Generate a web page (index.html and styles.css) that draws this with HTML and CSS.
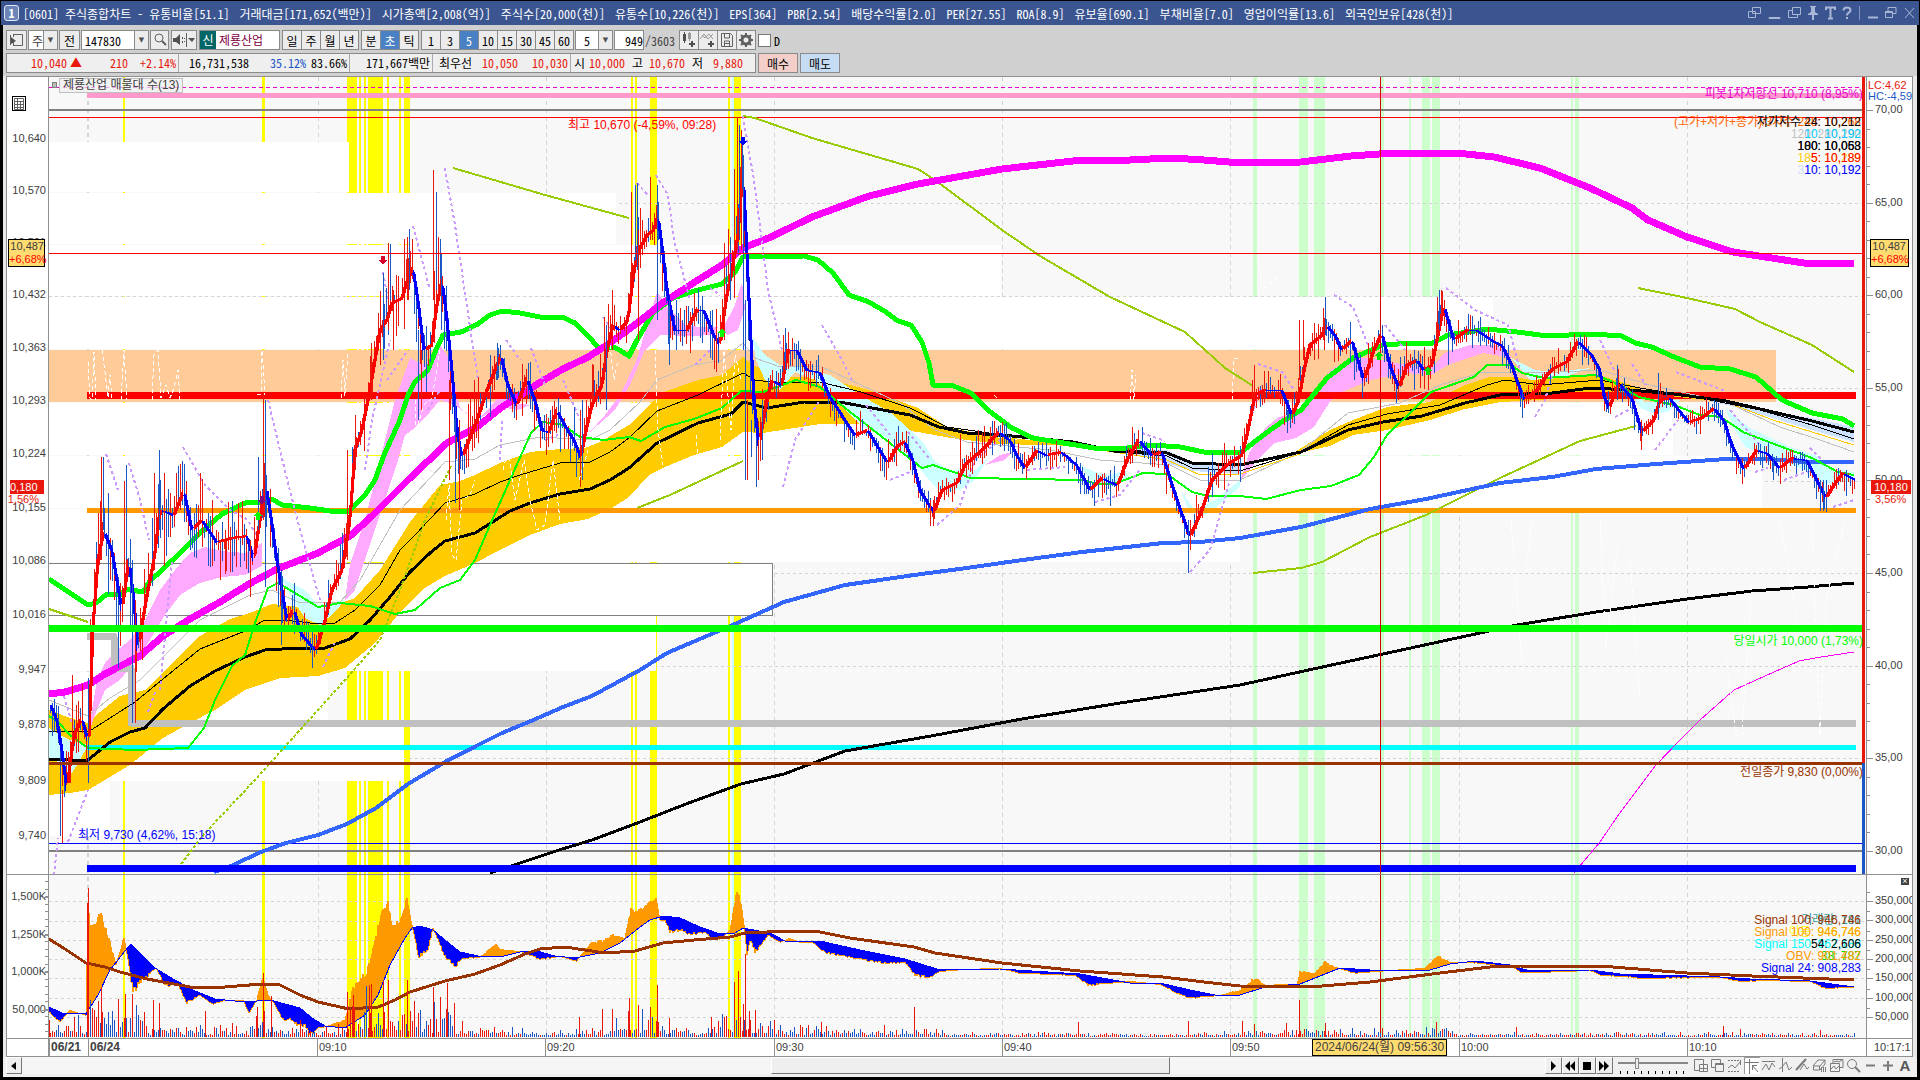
FILE: index.html
```html
<!DOCTYPE html>
<html lang="ko">
<head>
    <meta charset="utf-8">
    <title>[0601] 주식종합차트</title>
    <link rel="stylesheet" href="styles.css">
</head>
<body>
<div class="window">
    <header class="titlebar">
        <span class="num">1</span>
        <h1><span>[0601] 주식종합차트 - 유통비율[51.1]</span><span>거래대금[171,652(백만)]</span><span>시가총액[2,008(억)]</span><span>주식수[20,000(천)]</span><span>유통수[10,226(천)]</span><span>EPS[364]</span><span>PBR[2.54]</span><span>배당수익률[2.0]</span><span>PER[27.55]</span><span>ROA[8.9]</span><span>유보율[690.1]</span><span>부채비율[7.0]</span><span>영업이익률[13.6]</span><span>외국인보유[428(천)]</span></h1>
        <div class="winbtns">
            <button aria-label="복사"><svg width="16" height="14"><path d="M5.500 1.500h8v6h-8zM1.500 5.500h7v6h-7z"/></svg></button>
            <button aria-label="내리기"><svg width="16" height="14"><path d="M2 11.500h11v1H2z"/></svg></button>
            <button aria-label="겹치기"><svg width="16" height="14"><path d="M5.500 1.500h8v7h-8zM5 4.500H1.500v7h9V9"/></svg></button>
            <button aria-label="고정"><svg width="12" height="14"><path class="f" d="M3 0h6v1H8v5l3 2v1H7v5H5V9H1V8l3-2V1H3z"/></svg></button>
            <button aria-label="글꼴"><svg width="14" height="14"><path d="M3 4V1.500h9V4M7.500 2v10M5 12.500h5" stroke-width="2"/></svg></button>
            <button aria-label="도움말"><svg width="12" height="14"><path d="M2.500 4.500c0-4 7-4 7 0 0 2-3.500 2-3.500 5M6 11v2" stroke-width="2"/></svg></button>
            <i></i>
            <button aria-label="최소화"><svg width="14" height="14"><path d="M2 11.500h10" stroke-width="2"/></svg></button>
            <button aria-label="이전 크기"><svg width="14" height="14"><path d="M4 5V1.500h8v6H9M1.500 5.500h7v6h-7zM1 6.500h8"/></svg></button>
            <button aria-label="닫기"><svg width="14" height="14"><path d="M3 2l9 10M12 2L3 12"/></svg></button>
        </div>
    </header>

    <div class="toolbar">
        <button class="tb ico" aria-label="패널"><svg width="15" height="14"><path d="M4.500 1.500h9v11h-9M4.500 1v3M4.500 9v4M1.500 2v10"/><path class="f" d="M2 9V4l5 4-5 3z"/></svg></button>
        <span class="drop w30"><select aria-label="종류"><option>주</option></select></span>
        <button class="tb">전</button>
        <span class="drop w68"><input class="code" aria-label="종목코드" value="147830"></span>
        <button class="tb find" aria-label="검색"><svg width="14" height="14"><circle cx="6" cy="5" r="4"/><path d="M9 8l4 4" stroke-width="2"/></svg></button>
        <span class="gap"></span>
        <button class="tb snd" aria-label="소리"><svg width="24" height="14"><path class="f" d="M1 5h3l4-4v11L4 9H1zM16 5h7l-3 4zM10 4h1v2h-1zM10 8h1v2h-1zM12 5h1v1h-1zM12 8h1v1h-1z"/><path d="M14.500 0v14"/></svg></button>
        <span class="gap"></span>
        <span class="stock"><b>신</b>제룡산업</span>
        <span class="gap"></span>
        <span class="grp g4"><button>일</button><button>주</button><button>월</button><button>년</button></span>
        <span class="gap"></span>
        <span class="grp g3"><button>분</button><button class="on">초</button><button>틱</button></span>
        <span class="gap"></span>
        <span class="grp g8"><button>1</button><button>3</button><button class="on">5</button><button>10</button><button>15</button><button>30</button><button>45</button><button>60</button></span>
        <span class="drop w38"><select aria-label="간격"><option>5</option></select></span>
        <input class="cnt" aria-label="봉 개수" value="949"><span class="total">/3603</span>
        <span class="grp g4 icons">
            <button aria-label="지표 추가"><svg width="18" height="18"><path class="f" d="M3 3h3v7H3zM4 1h1v11H4zM11 10h2v6h-2zM9 12h6v2H9z"/><path class="g" d="M8 2h3v6H8zM9 1h1v9H9z"/></svg></button>
            <button aria-label="라인 추가"><svg width="18" height="18"><path d="M1 8l4-5 4 5 5-5M3 4l3 3 4-4 4 5" stroke="#999"/><path class="f" d="M11 10h2v6h-2zM9 12h6v2H9z"/></svg></button>
            <button aria-label="저장"><svg width="18" height="18"><path d="M3.500 2.500h9l2 2v11h-11zM6.500 3v4h5V3M6.500 15v-5h5v5M7 12.500h4"/></svg></button>
            <button aria-label="설정"><svg width="18" height="18"><circle cx="9" cy="9" r="4" stroke-width="3"/><path d="M9 2v2M9 14v2M2 9h2M14 9h2M4 4l2 2M12 12l2 2M14 4l-2 2M4 14l2-2" stroke-width="2"/></svg></button>
        </span>
        <label class="chk"><input type="checkbox">D</label>
    </div>

    <div class="quote">
        <div class="qbox">
            <span class="red c60">10,040</span><span class="red c15">▲</span><span class="red c47">210</span><span class="red c48">+2.14%</span>
            <span class="bar c72">16,731,538</span><span class="blue c57">35.12%</span><span class="c41">83.66%</span>
            <span class="bar c81">171,667백만</span><span class="bar c39">최우선</span><span class="red c47">10,050</span><span class="red c50">10,030</span>
            <span class="bar c15">시</span><span class="red c39">10,000</span><span class="c18">고</span><span class="red c42">10,670</span><span class="c18">저</span><span class="red c39">9,880</span>
        </div>
        <button class="buy">매수</button><button class="sell">매도</button>
    </div>

    <main class="chart">
        <div class="axis left" id="axisL"><button class="cal" aria-label="표"><svg width="10" height="12"><path d="M.500.500h9v11h-9zM0 3.500h10M0 6.500h10M0 9.500h10M3.500 1v11M6.500 3v9"/></svg></button></div>
        <div class="plot">
            <svg id="price" viewBox="49 77 1817 797" preserveAspectRatio="none"></svg>
            <i class="dot"></i>
            <span class="study">제룡산업 매물대 수(13)</span>
            <div id="notes"></div>
        </div>
        <div class="axis right" id="axisR"></div>

        <div class="axis left" id="axisL2"></div>
        <div class="plot">
            <svg id="obv" viewBox="49 875 1817 163" preserveAspectRatio="none"></svg>
            <div id="notes2"></div>
        </div>
        <div class="axis right" id="axisR2"><button class="shut" aria-label="지표 닫기">×</button></div>

        <div class="axis left"></div>
        <div class="dates" id="dates"></div>
        <div class="axis right last">10:17:1</div>
    </main>

    <footer class="bottom">
        <button class="arr" aria-label="왼쪽"><svg width="8" height="10"><path class="k" d="M6 1v8L1 5z"/></svg></button>
        <div class="track"><div class="thumb"></div></div>
        <div class="play">
            <button aria-label="재생"><svg width="10" height="10"><path class="k" d="M3 0l5 5-5 5z"/></svg></button>
            <button aria-label="뒤로"><svg width="10" height="10"><path class="k" d="M5 0v10L0 5zM10 0v10L5 5z"/></svg></button>
            <button aria-label="정지"><svg width="10" height="10"><path class="k" d="M1 1h8v8H1z"/></svg></button>
            <button aria-label="앞으로"><svg width="10" height="10"><path class="k" d="M0 0v10l5-5zM5 0v10l5-5z"/></svg></button>
        </div>
        <input type="range" class="speed" aria-label="속도" min="0" max="100" value="26">
        <div class="tools">
            <button aria-label="새 창"><svg width="15" height="15"><path d="M6 12.500H1.500v-11h9V6M6.500 6.500h8v7h-8zM10.500 6v8M6 10.500h8"/></svg></button>
            <button aria-label="창 복사"><svg width="15" height="15"><path d="M5 9.500H1.500v-8h9V5M5.500 5.500h8v8h-8zM5 6.500h9"/></svg></button>
            <button aria-label="자동추세"><svg width="15" height="15"><path d="M1 2.500h12M1 13.500h12" stroke-dasharray="2 1"/><path d="M1 10l4-3 3 3 5-6M13.500 2v5"/></svg></button>
            <button class="on" aria-label="십자선"><svg width="15" height="15"><path d="M0 3.500h14M4.500 0v15M7 6l6 7M7.500 6v5M7 6.500h5" /></svg></button>
            <button aria-label="수평선"><svg width="15" height="15"><path d="M1 3.500h13M1 12l4-6 3 6 3-7 3 4"/></svg></button>
            <button aria-label="수직선"><svg width="15" height="15"><path d="M4.500 0v14M1 11l3-2 4-5 3 8 3-3"/></svg></button>
            <button aria-label="추세선"><svg width="15" height="15"><path d="M1 12L11 1" stroke-width="2"/><path d="M5 12l4-6 3 5 2-2"/></svg></button>
            <button aria-label="모두 지우기"><svg width="15" height="15"><path d="M1 8l5-6h7l-5 6zM1.500 8v4h6V8M8 12l5-6V2M9.500 9v5M11.500 9v5M13.500 9v5"/></svg></button>
            <button aria-label="차트 겹침"><svg width="15" height="15"><path d="M4 5V1.500h10v8h-3M1.500 5.500h9v8h-9zM2 11l3-3 2 3 3-3M5 4l3-1 2 1 3-2"/></svg></button>
            <button aria-label="돋보기"><svg width="15" height="15"><circle cx="6" cy="6" r="4.500"/><path d="M9 9l5 5" stroke-width="2"/></svg></button>
            <button aria-label="축소"><svg width="15" height="15"><path d="M3 7.500h9" stroke-width="2"/></svg></button>
            <button aria-label="확대"><svg width="15" height="15"><path d="M3 7.500h10M8 3v10" stroke-width="2"/></svg></button>
            <button class="a" aria-label="자동">A</button>
        </div>
    </footer>
</div>
<script src="chart.js"></script>
</body>
</html>
```
FILE: styles.css
```css
* { box-sizing: border-box; }
body {
    margin: 0;
    background: #000;
    color: #000;
    font: 12px "Noto Sans Mono CJK KR", "Noto Sans CJK KR", "Liberation Mono", monospace;
}
button, input, select { font: inherit; color: inherit; margin: 0; padding: 0; border-radius: 0; }
svg { display: block; fill: none; stroke: #606060; }
svg .f { fill: #505050; stroke: none; }
svg .g { fill: #999; stroke: none; }
svg .k { fill: #000; stroke: none; }

.window {
    display: flex;
    flex-direction: column;
    height: 100vh;
    border: solid #000;
    border-width: 1px 3px 3px;
    background: #e8e8e8;
}

/* title */
.titlebar {
    display: flex;
    align-items: center;
    flex: none;
    height: 24px;
    margin-left: -2px;
    margin-right: -2px;
    padding: 0 3px 0 3px;
    background: #3b5591;
    color: #fff;
}
.titlebar .num {
    width: 15px;
    height: 16px;
    border: 1px solid #dfe6f5;
    border-radius: 3px;
    background: #6c84b8;
    line-height: 14px;
    text-align: center;
    font-weight: bold;
}
.titlebar h1 {
    display: flex;
    gap: 10px;
    flex: 1;
    margin: 0 0 0 4px;
    font-size: 12px;
    font-weight: normal;
    white-space: pre;
    overflow: hidden;
}
.winbtns { display: flex; align-items: center; gap: 4px; }
.winbtns button { border: 0; background: none; }
.winbtns svg { stroke: #a9b6d6; }
.winbtns svg .f { fill: #a9b6d6; }
.winbtns i { width: 1px; height: 14px; margin: 0 2px; background: #8394c0; }

/* toolbar */
.toolbar {
    display: flex;
    align-items: center;
    flex: none;
    gap: 1px;
    height: 28px;
    padding: 5px 3px 3px;
    background: #d0d0d0;
}
.toolbar .gap { width: 0; }
.tb, .grp, .drop, .cnt, .stock {
    flex: none;
    height: 20px;
    border: 1px solid #8a8a8a;
    background: #ececec;
}
.tb { width: 21px; }
.tb.ico { padding-left: 2px; }
.tb.find { width: 19px; padding-left: 2px; }
.tb.snd { width: 26px; }
.drop { position: relative; display: flex; background: #fff; }
.drop select, .drop input {
    width: 100%;
    padding-left: 3px;
    border: 0;
    background: none;
    appearance: none;
}
.drop select { color: #404040; }
.drop::after {
    content: "▼";
    position: absolute;
    right: 0;
    top: 0;
    width: 13px;
    height: 18px;
    border-left: 1px solid #8a8a8a;
    background: #ececec;
    color: #505050;
    font: 7px/18px "DejaVu Sans", sans-serif;
    text-align: center;
    pointer-events: none;
}
.w30 { width: 30px; }
.w68 { width: 68px; }
.w38 { width: 38px; }
.w38 select { padding-left: 8px; color: #000; }
.stock { width: 81px; background: #fff; color: #800040; line-height: 18px; }
.stock b {
    display: inline-block;
    width: 16px;
    height: 18px;
    margin-right: 3px;
    background: #006666;
    color: #fff;
    font-weight: normal;
    text-align: center;
}
.grp { display: flex; }
.grp button { flex: 1; min-width: 0; border: 0; border-right: 1px solid #8a8a8a; background: none; }
.grp button:last-child { border-right: 0; }
.grp .on { background: #4a80c4; color: #fff; }
.g3 { width: 58px; }
.g4 { width: 77px; }
.g8 { width: 153px; }
.icons { margin-left: 3px; }
.cnt { width: 30px; background: #fff; text-align: right; }
.total { color: #404040; }
.chk { display: flex; align-items: center; gap: 3px; margin-left: 1px; }
.chk input { width: 13px; height: 13px; appearance: none; border: 1px solid #777; background: #fff; }

/* quote line */
.quote {
    display: flex;
    flex: none;
    gap: 2px;
    height: 23px;
    padding: 0 3px 3px;
    background: #d0d0d0;
}
.qbox {
    display: flex;
    align-items: center;
    width: 750px;
    border: 1px solid #8a8a8a;
    background: #efefef;
    white-space: nowrap;
}
.qbox span { flex: none; text-align: right; line-height: 18px; }
.qbox .bar { border-left: 1px solid #aaa; margin-left: 2px; }
.red { color: #e8190c; }
.blue { color: #1a56c4; }
.c15 { width: 15px; }
.c18 { width: 18px; }
.c39 { width: 40px; }
.c41 { width: 41px; }
.c42 { width: 42px; }
.c47 { width: 46px; }
.c48 { width: 48px; }
.c50 { width: 50px; }
.c57 { width: 57px; }
.c60 { width: 60px; }
.c72 { width: 71px; }
.c81 { width: 81px; }
.quote button { width: 40px; border: 1px solid #8a8a8a; }
.quote .buy { background: #f4cfc9; }
.quote .sell { background: #c6dcf2; }

/* chart */
.chart {
    display: grid;
    grid-template-columns: 42px 1fr 46px;
    grid-template-rows: 1fr 164px 17px;
    flex: 1;
    min-height: 0;
    margin: 0 4px 0 3px;
    border: 1px solid #909090;
    background: #fff;
    font: 11px "Liberation Sans", "Noto Sans CJK KR", sans-serif;
    color: #404040;
}
.axis { position: relative; overflow: hidden; }
.axis.left { border-right: 1px solid #909090; }
.axis.right { border-left: 1px solid #909090; }
.chart > :nth-child(-n+6) { border-bottom: 1px solid #909090; }
.axis span { position: absolute; line-height: 14px; margin-top: -7px; white-space: nowrap; }
.axis.left span { right: 2px; }
.axis.right span { left: 8px; }
.axis u { position: absolute; width: 3px; height: 1px; background: #909090; }
.axis u.big { width: 6px; }
.axis.left u { right: 0; }
.axis.right u { left: 0; }
.axis .cursor, .axis .now { z-index: 1; }
.axis .cursor {
    width: 37px;
    border: 1px solid #000;
    background: #ffdb70;
    line-height: 13px;
    text-align: right;
}
.axis .cursor em { display: block; color: #f00; font-style: normal; }
.axis.left .cursor { right: 3px; }
.axis.right .cursor { left: 3px; width: 39px; padding-right: 2px; }
.axis .now { width: 34px; background: #e8190c; color: #fff; }
.axis.left .now { right: 4px; }
.axis.right .now { left: 4px; width: 40px; text-align: center; }
.axis .r { color: #e8190c; }
.axis .b { color: #1a56c4; }
.axis.right .r, .axis.right .b { left: 1px; }
.axis.right .p { left: 8px; }
.axis.left .p { right: 9px; }
.cal {
    position: absolute;
    left: 5px;
    top: 19px;
    width: 14px;
    height: 15px;
    border: 1px solid #000;
    background: #fff;
}
.cal svg { margin-left: 1px; }
.shut {
    position: absolute;
    right: 3px;
    top: 3px;
    width: 8px;
    height: 7px;
    border: 0;
    background: #404040;
    color: #fff;
    font-size: 9px;
    line-height: 7px;
}
.last { padding-left: 7px; line-height: 16px; }
.plot { position: relative; overflow: hidden; background: #f8f8f8; }
.plot svg { width: 100%; height: 100%; shape-rendering: crispEdges; stroke: none; }
.dot { position: absolute; left: 3px; top: 5px; width: 5px; height: 6px; border: 1px solid #808080; background: #bbb; }
.study {
    position: absolute;
    left: 10px;
    top: 1px;
    padding: 0 3px;
    border: 1px solid #c0c0c0;
    background: rgba(240, 240, 240, .7);
    font-size: 12px;
    line-height: 13px;
}
.note { position: absolute; font-size: 12px; line-height: 12px; margin-top: -6px; white-space: nowrap; }
.dates { position: relative; overflow: hidden; }
.dates span { position: absolute; top: 0; height: 17px; line-height: 16px; padding-left: 1px; border-left: 1px solid #909090; }
.dates .d { font-weight: bold; font-size: 12px; }
.dates .cross { padding: 0 2px; border: 1px solid #000; background: #ffdb70; font-size: 12px; line-height: 15px; z-index: 1; }

/* scroll + tools */
.bottom {
    display: flex;
    flex: none;
    align-items: center;
    height: 20px;
    padding: 0 4px 3px 3px;
    background: #f0f0f0;
}
.arr, .thumb, .play button {
    border: 1px solid;
    border-color: #fff #777 #777 #fff;
    background: #efefef;
}
.arr { width: 16px; height: 17px; padding-left: 3px; }
.track { flex: 1; height: 17px; background: #f6f6f6; }
.thumb { width: 26.2%; height: 17px; margin-left: 49.2%; }
.play { display: flex; }
.play button { width: 17px; height: 17px; padding-left: 2px; }
.speed { width: 70px; height: 17px; margin: 0 5px 0 5px; appearance: none; background: linear-gradient(#888, #888) 0 5px / 100% 2px no-repeat, repeating-linear-gradient(90deg, #000 0 1px, transparent 1px 7px) 2px 14px / 100% 3px no-repeat; }
.speed::-webkit-slider-thumb { appearance: none; width: 4px; height: 11px; margin-top: -4px; border: 1px solid #888; background: #eee; }
.tools { display: flex; gap: 1px; }
.tools button { width: 16px; height: 17px; border: 0; background: none; }
.tools svg { stroke: #7a7a7a; }
.tools .on { border: 1px solid #999; border-width: 1px 0 0 1px; background: #fff; }
.tools .a { font: bold 15px/17px "Liberation Sans", sans-serif; color: #555; }
```
FILE: chart.js
```js
var NS = 'http://www.w3.org/2000/svg';
var price = document.getElementById('price');
var obv = document.getElementById('obv');

function add(svg, tag, attrs) {
    var el = document.createElementNS(NS, tag);
    for (var k in attrs) el.setAttribute(k, attrs[k]);
    svg.appendChild(el);
}
function rect(svg, x, y, w, h, c) { add(svg, 'rect', {x: x, y: y, width: w, height: h, fill: c}); }
function line(svg, pts, c, w, dash) {
    var a = {points: pts, stroke: c, 'stroke-width': w, 'stroke-linejoin': 'round'};
    if (dash) a['stroke-dasharray'] = dash;
    add(svg, 'polyline', a);
}
function area(pts, c) { add(price, 'polygon', {points: pts, fill: c}); }
function parse(s) { return s.split(' ').map(function (p) { return p.split(',').map(Number); }); }
// linear value of a point list at x
function at(pts, x) {
    if (x <= pts[0][0]) return pts[0][1];
    for (var i = 1; i < pts.length; i++) {
        if (x <= pts[i][0]) {
            var a = pts[i - 1], b = pts[i];
            return a[1] + (b[1] - a[1]) * (x - a[0]) / (b[0] - a[0]);
        }
    }
    return pts[pts.length - 1][1];
}
var seed = 7;
function rnd() { seed = (seed * 16807) % 2147483647; return seed / 2147483647; }

// signal stripes
var yellow = [[123, 2], [262, 3], [347, 10], [359, 2], [364, 2], [368, 15], [387, 2], [399, 2], [404, 6], [631, 2], [635, 2], [650, 7], [728, 2], [734, 7]];
var green = [[1253, 4], [1299, 9], [1314, 11], [1381, 3], [1409, 2], [1422, 8], [1432, 8], [1571, 2], [1575, 4]];
var gridX = [318, 546, 774, 1002, 1230, 1459, 1687];
[price, obv].forEach(function (s) {
    yellow.forEach(function (v) { rect(s, v[0], 77, v[1], 970, '#ffff00'); });
    green.forEach(function (v) { rect(s, v[0], 77, v[1], 970, '#ccffcc'); });
    rect(s, 732, 77, 2, 970, '#ccffff');
    gridX.forEach(function (x) { line(s, x + '.5,77 ' + x + '.5,1047', '#d4d4d4', 1, '4 4'); });
    line(s, '88,77 88,1047', '#d4d4d4', 2, '4 4');
});
[203, 296, 388, 481, 573, 666, 758].forEach(function (y) { line(price, '49,' + y + '.5 1862,' + y + '.5', '#d4d4d4', 1, '3 3'); });
[901, 921, 940, 959, 978, 998, 1017].forEach(function (y) { line(obv, '49,' + y + '.5 1866,' + y + '.5', '#d4d4d4', 1, '3 3'); });

// volume by price: top, bottom, right edge
[[142, 192, 349], [193, 244, 616], [245, 296, 1001], [297, 349, 1493], [403, 455, 1673], [456, 508, 1762],
 [509, 562, 1240], [616, 671, 656], [672, 725, 328], [726, 781, 404], [782, 836, 110]].forEach(function (b) {
    rect(price, 49, b[0], b[2] - 49, b[1] - b[0], '#fff');
});
rect(price, 49, 350, 1727, 52, '#ffcc99');
rect(price, 49, 563, 724, 53, '#808080');
rect(price, 49, 564, 723, 51, '#fff');

// gold cloud
area('49,710 70,718 88,723 100,712 120,696 145,690 180,655 200,636 230,619 250,613 272,604 300,607 335,605 355,598 380,570 410,522 440,485 460,481 475,475 500,463 530,452 560,449 585,448 600,442 629,425 661,393 698,380 722,375 743,357 753,365 780,377 820,377 869,390 918,408 947,427 1000,438 1080,446 1000,444 951,438 918,432 861,424 820,424 763,433 743,432 722,447 694,455 665,467 649,475 629,497 612,508 588,519 560,524 530,535 500,550 475,563 445,576 425,588 400,612 375,643 345,668 318,676 280,678 245,690 215,710 190,723 163,738 130,765 110,777 88,790 70,793 49,795', '#ffcc00');
area('1290,455 1330,430 1353,420 1387,407 1430,402 1465,385 1490,377 1515,377 1530,380 1560,378 1595,374 1625,383 1650,393 1680,396 1650,396 1600,395 1540,400 1500,402 1465,409 1430,420 1387,430 1353,435 1330,446', '#ffcc00');
area('1700,399 1773,412 1812,418 1854,427 1854,442 1812,430 1740,408', '#cce0ff');
area('1094,447 1167,450 1192,462 1240,464 1240,474 1192,471 1150,458', '#cce0ff');
// fast clouds
['88,735 97,680 105,663 115,652 130,640 145,620 160,590 175,570 190,553 205,547 222,551 245,553 262,543 262,566 245,575 222,577 200,583 180,595 165,615 150,640 140,655 120,680 105,690 95,715',
 '345,600 350,565 365,520 375,480 385,440 395,400 410,358 425,365 440,345 450,360 460,408 475,420 455,405 440,400 430,412 415,428 405,435 398,460 385,500 370,545 355,590',
 '480,418 500,396 515,403 530,405 518,410 500,407',
 '590,432 605,415 620,395 636,362 650,315 657,292 670,310 685,325 700,327 718,327 715,335 690,336 660,335 645,350 630,385 615,410',
 '722,330 735,305 742,282 745,308 738,330 728,335', '985,465 1000,455 1012,452 1005,460',
 '1240,482 1249,453 1266,427 1279,417 1296,413 1314,390 1331,370 1353,357 1383,360 1405,365 1433,367 1444,353 1470,345 1496,345 1513,358 1483,353 1448,365 1431,375 1405,373 1370,380 1340,393 1331,400 1314,427 1296,438 1275,443 1257,460'
].forEach(function (p) { area(p, '#ffaaff'); });
['272,560 285,580 305,590 318,605 345,600 335,612 320,625 305,618 290,595', '49,728 60,735 70,740 88,745 80,760 68,779 60,762 49,760',
 '540,413 560,420 572,432 588,440 600,424 590,438 570,436',
 '752,337 765,355 780,365 800,367 830,375 860,395 890,412 910,430 925,445 935,462 950,470 975,470 990,455 975,480 960,490 940,492 925,475 905,455 890,440 860,425 835,400 815,380 795,372 780,390 765,380 756,360',
 '1080,465 1095,472 1110,475 1125,470 1130,480 1110,485 1090,480', '1180,490 1195,510 1215,500 1240,480 1240,487 1215,508 1205,515 1190,513',
 '1511,358 1535,370 1555,372 1590,368 1560,378 1530,380', '1630,390 1645,402 1680,400 1670,411 1655,414 1640,408',
 '1725,408 1750,428 1790,447 1815,455 1830,468 1854,472 1854,480 1825,484 1810,472 1780,460 1745,447 1735,430'
].forEach(function (p) { area(p, '#ccffff'); });

// levels
line(price, '49,87.5 1862,87.5', '#ee00cc', 1, '4 3');
rect(price, 87, 93, 1775, 5, '#ff99cc');
rect(price, 49, 109, 1813, 2, '#808080');
rect(price, 49, 117, 1813, 1, '#ff0000');
rect(price, 87, 392, 1769, 7, '#ff0000');
rect(price, 87, 508, 1769, 5, '#ff9900');
rect(price, 49, 843, 1813, 1, '#0000ff');
rect(price, 49, 850, 1813, 2, '#808080');
line(price, '87,636.5 114,636.5 114,668 131,668 131,723 1856,723', '#c0c0c0', 7);
rect(price, 87, 745, 1769, 5, '#00ffff');

// moving averages
line(price, '49,700 88,716 110,698 140,680 160,660 200,620 250,595 272,590 300,603 340,602 360,580 400,510 445,462 475,459 500,445 540,437 590,440 610,430 640,402 657,380 694,365 722,360 743,343 755,358 780,367 820,366 861,385 900,403 935,430 967,442 1050,450 1100,460 1170,465 1200,480 1240,480 1300,452 1348,413 1400,403 1440,385 1480,373 1560,372 1600,370 1650,385 1726,402 1780,427 1820,440 1854,452', '#c0c0c0', 1);
line(price, '947,430 1080,447 1167,460 1200,475 1240,474 1300,454', '#ffcc00', 1);
line(price, '1674,396 1726,402 1773,420 1812,432 1854,445', '#ffcc00', 1);
line(price, '49,731 88,732 110,718 135,702 163,679 200,649 245,631 265,620 285,620 318,624 335,623 355,610 380,585 400,550 415,535 445,503 475,494 500,482 520,475 560,463 590,462 610,452 629,438 657,411 698,395 743,373 755,380 780,383 820,382 861,392 910,408 947,427 1010,436 1073,442 1130,453 1167,456 1192,468 1240,471 1301,452 1348,425 1387,414 1440,405 1487,385 1505,380 1540,385 1600,380 1640,388 1700,398 1760,410 1812,425 1854,439', '#000', 1);
line(price, '49,759 68,760 88,760 110,742 130,732 145,728 163,709 190,686 215,671 245,657 265,650 300,648 325,648 350,639 370,620 390,597 410,572 430,553 445,541 475,533 510,511 530,503 560,494 590,489 610,480 629,468 657,443 698,423 731,414 743,402 767,408 804,402 845,403 910,415 939,427 967,433 1012,436 1073,442 1114,451 1167,453 1192,463 1240,465 1301,452 1348,430 1383,422 1422,416 1465,403 1500,395 1552,393 1591,388 1630,390 1674,394 1726,401 1773,412 1812,421 1854,432', '#000', 3);
line(price, '49,609 88,622', '#99cc00', 2);
line(price, '453,168 477,175 545,195 629,218', '#99cc00', 2);
line(price, '743,116 755,118 812,138 918,169 935,180 1002,230 1040,256 1110,297 1185,332 1205,350 1225,368 1253,386', '#99cc00', 2);
line(price, '1638,288 1687,298 1735,309 1760,322 1812,345 1854,372', '#99cc00', 2);
line(price, '175,872 205,833 255,780 300,730 345,680 380,640 400,590 425,520 452,464', '#99cc00', 2, '3 2');
line(price, '637,508 670,495 743,461', '#99cc00', 2);
line(price, '1253,573 1301,568 1322,562 1370,537 1426,515 1500,478 1580,441 1636,426', '#99cc00', 2);
line(price, '214,872 231,866 261,852 286,843 318,835 347,824 376,808 408,784 445,762 478,745 502,733 531,721 563,707 592,696 640,670 667,653 735,624 784,602 845,585 880,580 914,575 967,568 1008,562 1082,552 1163,543 1200,542 1240,538 1301,527 1370,509 1426,499 1500,483 1552,477 1596,469 1656,464 1726,459 1769,459 1804,462 1854,462', '#3366ff', 4);
line(price, '490,873 514,865 559,850 592,840 640,822 686,804 741,784 784,774 845,751 931,736 1022,719 1120,703 1240,685 1327,666 1383,654 1517,625 1596,612 1687,599 1752,591 1808,587 1854,583', '#000', 3);
line(price, '1574,873 1600,842 1617,817 1635,793 1656,765 1678,742 1700,720 1734,690 1765,676 1799,661 1821,657 1854,652', '#ff00ff', 1);
line(price, '49,716 58,722 70,735 88,748 135,750 188,748 204,728 215,700 232,666 245,655 255,623 268,588 278,583 300,596 318,607 340,603 370,606 395,614 415,610 440,588 460,580 475,560 490,525 510,480 531,433 543,422 563,425 580,437 604,440 629,437 641,441 665,427 694,419 722,408 741,391 763,392 796,380 820,387 845,408 886,440 922,468 933,465 971,478 1082,480 1098,484 1114,484 1143,473 1167,474 1192,492 1208,496 1240,496 1266,499 1301,490 1331,486 1359,475 1374,457 1387,435 1413,410 1431,392 1474,377 1487,365 1511,365 1522,373 1544,378 1596,375 1613,382 1639,397 1674,405 1700,415 1721,417 1743,432 1782,447 1812,458 1838,472 1854,475', '#00ff00', 2);
line(price, '49,579 88,605 96,603 107,594 120,595 127,589 143,592 150,581 163,569 180,553 200,533 222,514 245,503 262,502 272,499 282,505 310,508 330,511 349,511 365,495 375,480 384,455 400,420 408,395 415,382 428,370 436,350 443,335 461,332 478,324 490,315 502,311 520,313 540,317 562,317 575,323 588,336 598,347 616,348 629,356 637,340 653,313 673,298 698,290 722,284 735,272 743,257 804,256 818,260 833,273 849,295 869,302 886,312 898,321 911,325 922,342 929,363 933,385 951,385 971,393 988,410 1012,428 1033,438 1094,448 1127,448 1151,445 1180,447 1204,452 1240,453 1266,433 1283,421 1301,410 1327,378 1353,358 1383,345 1413,343 1433,343 1448,335 1487,329 1517,332 1548,336 1591,334 1622,336 1635,343 1652,347 1674,357 1700,367 1730,369 1756,377 1782,400 1812,413 1843,419 1854,426', '#00ff00', 5);
line(price, '49,694 65,692 88,685 105,674 140,656 163,636 190,619 220,602 249,584 277,569 318,553 350,536 372,516 392,496 408,480 447,443 477,427 502,407 518,397 539,383 563,369 588,357 604,347 628,330 640,321 661,304 698,280 722,265 743,248 771,237 812,217 869,196 918,184 1002,169 1082,160 1130,160 1171,158 1204,160 1241,163 1301,162 1351,156 1393,153 1457,153 1494,157 1540,168 1590,188 1632,208 1648,220 1687,237 1733,252 1804,263 1854,263', '#ff00ff', 7);

// trailing stops
['54,875 58,838', '64,696 74,730', '68,842 88,790', '106,454 118,490', '129,463 140,500 149,540', '183,447 205,485 230,510 248,520 256,535', '268,400 286,475 300,530 320,600', '160,690 172,560', '148,712 156,690',
 '323,667 336,640', '365,470 372,420 390,340', '387,380 408,350', '383,272 388,300', '413,226 430,290', '445,168 455,225 466,300 478,380', '428,410 440,390', '500,460 502,420', '506,340 520,360', '531,348 545,385', '563,380 580,420', '545,440 558,435',
 '603,317 612,330', '637,183 648,195', '656,175 668,195 674,240 690,300', '710,288 720,295', '743,116 754,180 768,290 782,350', '695,365 710,350', '783,487 795,440 820,400', '822,325 842,360 852,380', '866,405 890,435', '908,432 930,460', '890,480 910,472', '937,525 960,505 975,460 1000,440', '1027,470 1065,467', '1095,502 1120,495 1140,470', '1142,433 1165,441', '1190,572 1210,550 1230,480', '1258,364 1282,372 1294,390', '1250,420 1262,385', '1334,295 1353,307 1368,345', '1385,325 1405,350', '1446,288 1475,310 1508,325 1520,370', '1535,417 1545,400 1552,375', '1600,340 1615,372', '1615,417 1632,408', '1632,364 1646,385', '1655,450 1678,420', '1676,372 1725,391', '1730,410 1760,445', '1755,472 1768,468', '1784,480 1812,470', '1810,448 1822,460', '1833,507 1854,500'
].forEach(function (p) { line(price, p, '#cc99ff', 2, '3 3'); });

// price path
var p = parse('49,705 55,720 60,750 65,790 68,765 72,735 80,718 86,740 88,730 90,640 96,560 102,530 110,550 120,610 127,560 132,600 136,650 145,595 152,560 158,510 165,512 172,515 182,490 190,530 200,520 215,542 230,538 245,536 252,560 258,520 264,485 268,510 275,560 285,620 292,610 300,635 314,650 322,625 330,590 340,570 348,520 353,450 360,430 368,390 378,330 385,320 390,303 400,298 405,282 411,268 416,300 422,350 430,345 434,310 440,280 444,310 450,370 455,430 460,458 465,445 475,420 485,390 493,370 499,355 506,385 515,405 525,378 533,400 540,430 547,432 555,410 563,425 572,440 579,457 584,430 590,405 600,385 605,350 611,325 618,330 626,320 632,270 637,250 645,235 652,230 656,215 660,245 665,290 673,330 685,330 695,310 702,310 712,335 718,345 724,300 730,270 736,235 741,170 744,230 747,300 752,400 757,445 765,400 770,380 780,385 786,350 795,350 805,370 818,372 827,395 840,415 853,435 866,430 875,445 886,463 896,445 903,442 911,460 918,490 932,512 940,490 955,483 963,465 980,450 997,432 1008,440 1015,455 1023,468 1035,450 1045,455 1060,452 1075,465 1088,490 1100,478 1116,485 1125,460 1137,440 1150,455 1160,452 1172,490 1188,537 1200,510 1210,480 1225,465 1240,455 1245,435 1253,395 1262,390 1280,390 1290,415 1297,400 1302,370 1308,345 1320,335 1325,325 1333,335 1340,350 1350,340 1362,380 1372,350 1380,333 1388,365 1397,388 1405,365 1415,360 1422,370 1430,365 1437,330 1442,305 1452,340 1465,330 1475,330 1490,340 1500,345 1510,365 1522,400 1535,390 1545,375 1552,368 1565,362 1576,341 1590,355 1598,370 1602,395 1607,408 1617,383 1630,398 1640,432 1652,420 1658,400 1668,398 1677,410 1687,422 1700,418 1712,408 1722,420 1730,445 1742,469 1755,450 1765,453 1778,468 1790,458 1805,460 1815,480 1824,498 1832,485 1841,473 1854,480');
var swing = parse('49,26 88,48 160,42 262,36 330,22 380,40 460,42 500,28 590,30 660,34 720,28 745,55 765,30 830,18 1180,18 1250,24 1320,24 1450,22 1500,14 1854,16');
var up = '', dn = '', ru = '', rd = '', d;
for (var x = 50; x < 1855; x += 2) {
    var y = at(p, x), a = at(swing, x), rise = at(p, x + 3) < at(p, x - 3);
    d = 'M' + (x + .5) + ' ' + Math.round(y - a * rnd() * (.3 + rnd())) + 'V' + Math.round(y + 2 + a * rnd() * (.3 + rnd()));
    if (rnd() < (rise ? .75 : .3)) up += d; else dn += d;
}
// fast average against the slow one
for (x = 50; x < 1855; x++) {
    var y1 = at(p, x), y2 = (at(p, x - 4) + at(p, x - 2)) / 2;
    if (y1 < y2) ru += 'M' + (x + .5) + ' ' + Math.round(y1 - 1) + 'V' + Math.round(y2 + 1);
    else rd += 'M' + (x + .5) + ' ' + Math.round(y2) + 'V' + Math.round(y1 + 1);
}
add(price, 'path', {d: dn, stroke: '#1a56c4', 'stroke-width': 1});
add(price, 'path', {d: up, stroke: '#e8190c', 'stroke-width': 1});
add(price, 'path', {d: rd, stroke: '#0000ff', 'stroke-width': 1});
add(price, 'path', {d: ru, stroke: '#ff0000', 'stroke-width': 1});
// long wicks: x, high, low, rising
[[62, 790, 843, 1], [60, 760, 836, 0], [72, 675, 740, 1], [101, 457, 560, 1], [103, 457, 530, 0], [118, 600, 668, 0], [124, 481, 600, 1], [126, 465, 560, 0], [132, 560, 723, 0], [135, 600, 723, 1], [154, 473, 520, 1], [159, 450, 530, 0], [180, 464, 510, 1], [176, 473, 510, 1], [164, 505, 566, 1],
 [225, 530, 574, 1], [250, 540, 597, 1], [258, 457, 530, 0], [263, 393, 520, 1], [265, 400, 587, 0], [281, 570, 645, 0], [312, 640, 668, 0], [347, 450, 560, 1], [355, 415, 470, 1], [371, 343, 400, 1], [383, 273, 360, 0], [388, 243, 330, 1], [390, 244, 300, 0], [393, 290, 350, 1], [407, 237, 300, 1], [409, 229, 290, 0], [418, 330, 420, 0], [421, 350, 410, 1],
 [433, 170, 300, 1], [436, 192, 290, 0], [438, 237, 300, 1], [441, 253, 330, 0], [449, 380, 480, 1], [455, 400, 503, 0], [459, 420, 510, 1], [497, 343, 380, 0], [580, 410, 487, 1], [582, 400, 480, 0], [593, 365, 400, 1], [604, 317, 380, 1], [606, 327, 410, 0], [612, 290, 350, 1],
 [631, 192, 280, 1], [635, 185, 260, 0], [637, 183, 270, 0], [638, 230, 340, 1], [650, 177, 240, 1], [657, 185, 320, 0], [669, 300, 365, 0], [716, 330, 358, 1], [724, 243, 340, 1], [728, 229, 290, 1], [730, 237, 300, 0], [734, 169, 280, 1], [737, 117, 250, 1], [739, 125, 240, 0], [741, 130, 250, 1], [743, 155, 350, 0], [745, 300, 480, 0], [747, 400, 480, 1], [751, 420, 457, 0], [756, 440, 487, 0], [758, 440, 480, 1], [762, 400, 460, 0],
 [783, 335, 380, 1], [785, 328, 370, 0], [886, 460, 480, 1], [930, 500, 526, 1], [933, 500, 526, 1], [960, 434, 480, 1], [1188, 520, 573, 0], [1190, 520, 550, 1], [1254, 365, 400, 1], [1287, 410, 433, 0], [1299, 320, 380, 1], [1303, 320, 360, 1], [1325, 297, 335, 0], [1323, 308, 340, 1], [1437, 297, 340, 1], [1439, 290, 330, 0], [1441, 290, 320, 1], [1448, 330, 365, 0], [1522, 390, 418, 0], [1617, 365, 400, 0], [1641, 420, 450, 1], [1658, 373, 420, 0], [1773, 460, 480, 0], [1820, 480, 511, 0], [1823, 480, 511, 0]
].forEach(function (w) { rect(price, w[0], w[1], 1, w[2] - w[1], w[3] ? '#e8190c' : '#1a56c4'); });

// white volatility trace
['88,362 90,398 92,400 94,352 96,400', '102,350 105,372 108,398 110,375 112,400', '121,400 124,350 127,400', '152,400 154,355 158,350 161,398 166,385 170,398 174,388 178,370 180,400', '257,394 261,394 262,350 265,395', '341,398 343,360 345,396 348,352', '415,400 416,430 424,405 432,398 440,350', '446,520 449,485 452,555 456,560 462,500 470,495 475,480', '503,470 508,450 515,500 524,460 530,500 537,530 545,525 553,460 560,520', '579,480 588,450', '610,345 614,380 618,360', '655,350 658,430 663,465', '696,435 698,460', '720,440 724,350 731,430 735,355 741,380',
 '994,395 997,398', '1130,400 1132,370 1134,400 1136,375', '1232,400 1234,358 1240,358', '1258,250 1262,290 1280,275', '1511,520 1518,610 1522,670', '1525,580 1532,520', '1600,520 1606,650 1618,540', '1630,560 1640,700', '1725,650 1736,735 1742,735 1752,580', '1780,520 1800,640', '1812,520 1820,735 1826,600 1845,520'
].forEach(function (t) { line(price, t, '#fff', 1, '4 3'); });

// top levels drawn over everything
rect(price, 49, 625, 1813, 7, '#00ff00');
rect(price, 49, 762, 1813, 3, '#993300');
rect(price, 87, 865, 1769, 7, '#0000ff');
rect(price, 49, 253, 1813, 1, '#ff0000');
rect(price, 1380, 77, 1, 797, '#d40000');
rect(obv, 1380, 875, 1, 163, '#d40000');
rect(price, 1862, 77, 3, 686, '#e8190c');
rect(price, 1862, 763, 3, 111, '#1a56c4');
// markers
function arrow(x, y, s, c) { area([x - 4, y, x, y + 5 * s, x + 4, y, x + 2, y, x + 2, y - 4 * s, x - 2, y - 4 * s, x - 2, y].join(' '), c); }
arrow(383, 260, 1, '#d8002a');
arrow(743, 141, 1, '#0000ff');
arrow(262, 500, 1, '#800080');
arrow(258, 516, -1, '#00ff00');
arrow(722, 333, -1, '#00ff00');
arrow(1379, 356, -1, '#00e000');
arrow(1428, 371, -1, '#00e000');

// OBV against its signal
var sig = parse('49,1007 62,1013 86,1014 98,995 110,970 125,951 131,944 145,958 155,968 175,980 195,991 215,999 245,1002 270,1000 285,1004 300,1008 312,1018 325,1026 345,1028 365,1015 378,995 390,965 405,938 412,928 420,926 433,930 445,940 460,952 478,956 500,957 520,952 537,951 555,956 575,958 600,953 620,943 640,927 650,920 663,916 680,918 700,927 720,934 735,933 743,928 770,933 785,941 820,941 860,950 905,959 940,970 1000,969 1080,974 1130,983 1160,983 1190,990 1215,995 1240,995 1265,987 1300,984 1325,974 1340,968 1370,970 1430,970 1450,964 1475,961 1510,965 1530,971 1590,970 1620,974 1720,977 1750,979 1810,981 1854,987');
var ob = parse('49,1012 60,1022 70,1010 86,1015 88,905 90,925 95,925 101,914 105,930 110,943 116,965 124,938 128,960 133,990 142,980 156,968 165,985 178,985 187,1003 200,995 212,1004 225,1000 243,1000 249,1013 257,1000 263,975 268,995 275,1005 283,1020 290,1018 297,1025 305,1025 311,1035 318,1028 330,1025 345,1020 353,990 365,975 372,955 380,920 388,903 392,926 400,923 407,899 412,925 418,955 428,950 433,928 440,945 447,960 456,965 463,958 480,957 495,945 503,950 520,951 540,959 560,956 577,961 585,950 592,943 605,940 612,935 625,938 631,910 637,912 650,903 656,898 660,920 665,920 670,932 680,930 690,934 705,932 713,940 722,938 730,930 737,889 741,905 744,925 747,955 750,940 755,952 768,935 780,942 790,938 800,942 812,942 825,952 850,957 885,963 905,962 915,975 930,977 940,971 965,969 1000,968 1020,973 1075,975 1088,985 1130,981 1160,984 1175,992 1190,998 1220,995 1240,990 1255,978 1265,985 1280,984 1297,985 1300,972 1315,973 1325,962 1335,967 1345,970 1355,973 1365,972 1390,970 1425,968 1438,956 1450,962 1470,962 1500,965 1513,967 1520,972 1540,972 1590,970 1600,975 1625,976 1640,978 1720,977 1740,981 1770,980 1810,981 1825,988 1854,987');
var brown = '49,939 65,949 86,963 105,967 120,972 147,979 190,987 225,987 262,984 278,984 300,995 318,1002 349,1009 378,1007 395,1000 410,992 445,981 475,974 500,965 525,954 540,949 565,947 585,950 605,953 635,951 663,943 694,940 730,937 745,933 790,931 820,932 850,938 914,947 935,953 1002,963 1080,971 1163,977 1204,982 1240,986 1310,987 1370,982 1440,973 1490,967 1520,966 1613,967 1687,973 1752,976 1854,980';
var above = '', below = '', edge = '';
for (x = 49; x < 1855; x++) {
    var s = at(sig, x), o = at(ob, x);
    o += (rnd() - .5) * Math.min(9, Math.abs(o - s) * .25);
    d = 'M' + (x + .5) + ' ' + s + 'V' + o;
    if (o < s) above += d; else below += d;
    edge += x + ',' + Math.round(o) + ' ';
}
add(obv, 'path', {d: above, stroke: '#ff9900', 'stroke-width': 1});
add(obv, 'path', {d: below, stroke: '#0000ff', 'stroke-width': 1});
line(obv, edge.trim(), '#ff9900', 1);
line(obv, sig.join(' '), '#0000ff', 1);
line(obv, brown, '#993300', 3);

// volume
var env = parse('49,24 85,24 89,60 92,45 110,36 135,36 150,14 155,26 165,12 250,12 262,36 275,22 310,12 330,9 345,12 350,40 385,46 410,38 440,30 460,16 480,10 560,8 600,12 640,32 660,16 690,8 735,32 755,24 780,12 850,8 930,8 950,4 1180,3 1200,4 1240,5 1300,12 1330,7 1440,10 1460,4 1854,3');
up = ''; dn = '';
for (x = 50; x < 1855; x += 2) {
    var h = Math.round(1 + at(env, x) * (.1 + rnd() * rnd() * 1.2));
    d = 'M' + (x + .5) + ' 1037v-' + h;
    if (rnd() < .45) up += d; else dn += d;
}
add(obv, 'path', {d: dn, stroke: '#1a56c4', 'stroke-width': 1});
add(obv, 'path', {d: up, stroke: '#e8190c', 'stroke-width': 1});
[[88, 149], [87, 134], [49, 17], [98, 36], [101, 50], [118, 38], [125, 43], [132, 43], [153, 37], [159, 34], [205, 26], [257, 30], [263, 64], [271, 41], [347, 45], [353, 42], [369, 52], [371, 53], [383, 56], [388, 49], [407, 57], [414, 36], [433, 50], [440, 40], [447, 54], [454, 34], [579, 20], [602, 28], [612, 28], [629, 39], [638, 32], [650, 30], [657, 52], [669, 19], [711, 20], [734, 55], [738, 66], [743, 33], [745, 83], [749, 26], [755, 27], [821, 15], [884, 12], [914, 30], [1078, 15], [1188, 16], [1242, 16], [1254, 13], [1299, 37], [1325, 14], [1436, 15], [1516, 10], [1723, 11], [1740, 8], [1820, 7]
].forEach(function (v) { rect(obv, v[0], 1037 - v[1], 1, v[1], '#e8190c'); });

// axis text; y is in chart units
function label(id, y, html, cls, top, h) {
    var el = document.createElement('span');
    el.innerHTML = html;
    if (cls) el.className = cls;
    el.style.top = (y - top) / h * 100 + '%';
    document.getElementById(id).appendChild(el);
}
function tick(id, y, big, top, h) {
    var el = document.createElement('u');
    if (big) el.className = 'big';
    el.style.top = (y - top) / h * 100 + '%';
    document.getElementById(id).appendChild(el);
}
[['10,640', 138], ['10,570', 190], ['10,501', 242], ['10,432', 294], ['10,363', 347], ['10,293', 400], ['10,224', 453], ['10,155', 507], ['10,086', 560], ['10,016', 614], ['9,947', 669], ['9,878', 724], ['9,809', 780], ['9,740', 835]].forEach(function (v) { label('axisL', v[1], v[0], '', 77, 797); });
['70,00', '65,00', '60,00', '55,00', '50,00', '45,00', '40,00', '35,00', '30,00'].forEach(function (v, i) {
    var y = 110 + i * 92.600;
    label('axisR', y - 1, v, '', 77, 797);
    tick('axisR', y, 1, 77, 797);
    for (var k = 1; k < 5 && i < 8; k++) tick('axisR', y + k * 18.500, 0, 77, 797);
});
label('axisL', 246, '10,487<em>+6,68%</em>', 'cursor', 77, 797);
label('axisR', 246, '10,487<em>+6,68%</em>', 'cursor', 77, 797);
label('axisL', 487, '0,180', 'now', 77, 797);
label('axisR', 487, '10,180', 'now', 77, 797);
label('axisL', 499, '1,56%', 'r p', 77, 797);
label('axisR', 499, '3,56%', 'r p', 77, 797);
label('axisR', 85, 'LC:4,62', 'r', 77, 797);
label('axisR', 96, 'HC:-4,59', 'b', 77, 797);
[['1,500K', 896], ['1,250K', 934], ['1,000K', 971], ['50,000', 1009]].forEach(function (v) { label('axisL2', v[1], v[0], '', 875, 163); tick('axisL2', v[1] + 1, 1, 875, 163); });
for (var t = 881; t < 1037; t += 7.500) tick('axisL2', t, 0, 875, 163);
['350,000', '300,000', '250,000', '200,000', '150,000', '100,000', '50,000'].forEach(function (v, i) {
    label('axisR2', 900 + i * 19.300, v, '', 875, 163);
    tick('axisR2', 901 + i * 19.300, 1, 875, 163);
    tick('axisR2', 892 + i * 19.300, 0, 875, 163);
});

// notes on the plots: text, y, colour, side, distance
function note(id, text, y, c, side, dist, top, h) {
    var el = document.createElement('div');
    el.className = 'note';
    el.textContent = text;
    el.style.color = c;
    el.style.top = (y - top) / h * 100 + '%';
    el.style[side] = dist + 'px';
    document.getElementById(id).appendChild(el);
}
[['피봇1차저항선 10,710 (8,95%)', 94, '#ee00cc', 'right', 3], ['(고가+저가+종가)/3지수 248: 10,268', 122, '#ff6600', 'right', 5], ['저가지수 24: 10,212', 122, '#000', 'right', 5],
 ['120: 280,290', 134, '#c0c0c0', 'right', 5], ['10: 10,192', 134, '#00ccff', 'right', 5], ['100: 10,068', 146, '#000', 'right', 5], ['180: 10,053', 146, '#000', 'right', 5],
 ['185: 10,289', 158, '#ffcc00', 'right', 5], ['5: 10,189', 158, '#ff0000', 'right', 5], ['310: 10,192', 170, '#cce0ff', 'right', 5], ['10: 10,192', 170, '#0000ff', 'right', 5],
 ['당일시가 10,000 (1,73%)', 641, '#00ff00', 'right', 3], ['전일종가 9,830 (0,00%)', 772, '#993300', 'right', 3],
 ['최고 10,670 (-4,59%, 09:28)', 125, '#ff0000', 'left', 519], ['최저 9,730 (4,62%, 15:18)', 835, '#0000ff', 'left', 29]
].forEach(function (n) { note('notes', n[0], n[1], n[2], n[3], n[4], 77, 797); });
[['거래량: 181', 920, '#339999'], ['Signal 100: 946,746', 920, '#993300'], ['이동: 946,746', 932, '#ffff00'], ['Signal 100: 946,746', 932, '#ff9900'],
 ['Signal 150: 967,188', 944, '#00ffff'], ['54: 2,606', 944, '#000'], ['38: 787', 956, '#00dd00'], ['OBV: 901,482', 956, '#ff9900'], ['Signal 24: 908,283', 968, '#0000ff']
].forEach(function (n) { note('notes2', n[0], n[1], n[2], 'right', 5, 875, 163); });

[['06/21', 49, 'd'], ['06/24', 88, 'd'], ['09:10', 317], ['09:20', 545], ['09:30', 774], ['09:40', 1002], ['09:50', 1230], ['10:00', 1459], ['10:10', 1687], ['2024/06/24(월) 09:56:30', 1312, 'cross']].forEach(function (v) {
    var el = document.createElement('span');
    el.textContent = v[0];
    if (v[2]) el.className = v[2];
    el.style.left = (v[1] - 49) / 1817 * 100 + '%';
    document.getElementById('dates').appendChild(el);
});
```
